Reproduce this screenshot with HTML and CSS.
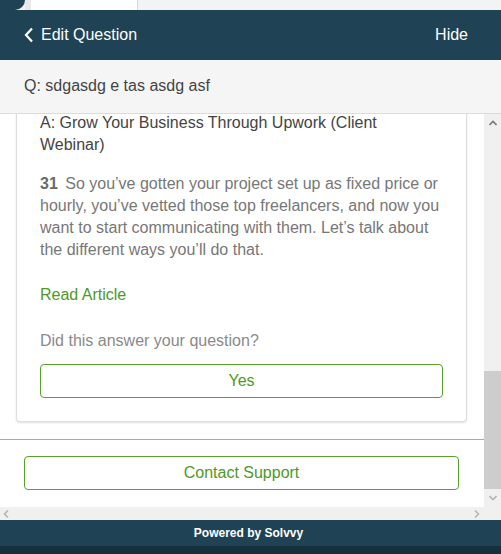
FILE: index.html
```html
<!DOCTYPE html>
<html lang="en">
<head>
    <meta charset="UTF-8">
    <meta name="viewport" content="width=device-width, initial-scale=1.0">
    <title>Solvvy - Edit Question</title>
    <link rel="stylesheet" href="styles.css">
</head>
<body>
    <div class="backdrop">
        <div class="blob"></div>
        <div class="gap"></div>
        <div class="sheet"></div>
        <div class="rest"></div>
    </div>

    <div class="widget">
        <div class="header">
            <a class="back" href="#">
                <svg width="10" height="16" viewBox="0 0 10 16"><path d="M8 1.5 L2 8 L8 14.5" fill="none" stroke="#fff" stroke-width="2.2"/></svg>
                Edit Question
            </a>
            <a class="hide" href="#">Hide</a>
        </div>

        <div class="question">Q: sdgasdg e tas asdg asf</div>

        <div class="scroller">
            <div class="content">
                <div class="card">
                    <h3 class="answer-title">A: Grow Your Business Through Upwork (Client Webinar)</h3>
                    <p class="answer-text"><b class="count">31</b> So you’ve gotten your project set up as fixed price or hourly, you’ve vetted those top freelancers, and now you want to start communicating with them. Let’s talk about the different ways you’ll do that.</p>
                    <a class="read-more" href="#">Read Article</a>
                    <p class="prompt">Did this answer your question?</p>
                    <button class="outline-btn">Yes</button>
                </div>
                <hr class="divider">
                <div class="contact">
                    <button class="outline-btn">Contact Support</button>
                </div>
            </div>
            <div class="vbar">
                <svg class="arrow" width="8" height="6" viewBox="0 0 8 6"><path d="M0.5 5 L4 1.5 L7.5 5" fill="none" stroke="#7a7a7a" stroke-width="1.6"/></svg>
                <div class="vtrack"><div class="vthumb"></div></div>
                <svg class="arrow" width="8" height="6" viewBox="0 0 8 6"><path d="M0.5 1 L4 4.5 L7.5 1" fill="none" stroke="#b5b5b5" stroke-width="1.6"/></svg>
            </div>
        </div>

        <div class="hbar">
            <svg width="6" height="8" viewBox="0 0 6 8"><path d="M5 0.5 L1.5 4 L5 7.5" fill="none" stroke="#b5b5b5" stroke-width="1.6"/></svg>
            <svg width="6" height="8" viewBox="0 0 6 8"><path d="M1 0.5 L4.5 4 L1 7.5" fill="none" stroke="#b5b5b5" stroke-width="1.6"/></svg>
            <div class="corner"></div>
        </div>

        <div class="footer">Powered by Solvvy</div>
        <div class="shade"></div>
    </div>
</body>
</html>
```

FILE: styles.css
```css
body {
    margin: 0;
    font-family: "Liberation Sans", Arial, sans-serif;
    background: #fff;
    width: 501px;
    overflow: hidden;
}
.backdrop {
    display: flex;
    height: 10px;
    background: #f3f3f3;
}
.blob {
    width: 25px;
    background: #1f4354;
    border-bottom-right-radius: 12px;
}
.gap {
    width: 6px;
    background: #e8e8e8;
}
.sheet {
    width: 106px;
    background: #fff;
    border-right: 1px solid #d8d8d8;
}
.rest {
    flex: 1;
}
.widget {
    display: flex;
    flex-direction: column;
}
.header {
    height: 50px;
    background: #1f4354;
    display: flex;
    align-items: center;
    justify-content: space-between;
    padding: 0 33px 0 24px;
    font-size: 16px;
}
.header a {
    color: #fff;
    text-decoration: none;
}
.back {
    display: flex;
    align-items: center;
    gap: 7px;
}
.question {
    height: 54px;
    box-sizing: border-box;
    border-bottom: 1px solid #dcdcdc;
    background: #f5f5f5;
    display: flex;
    align-items: center;
    padding: 0 24px 1px;
    color: #444;
    font-size: 16px;
}
.scroller {
    display: flex;
    height: 393px;
    overflow: hidden;
}
.content {
    width: 484px;
    background: #fff;
}
.card {
    margin: 0 17px 0 16px;
    border: 1px solid #dedede;
    border-top: none;
    border-radius: 0 0 4px 4px;
    box-shadow: 0 1px 2px rgba(0, 0, 0, 0.12);
    padding: 0 23px 23px;
}
.answer-title {
    margin: -2px 0 0;
    font-size: 16px;
    font-weight: normal;
    line-height: 22px;
    color: #444;
}
.answer-text {
    margin: 17px 0 0;
    font-size: 16px;
    line-height: 22px;
    color: #777;
}
.count {
    color: #6a6a6a;
    margin-right: 3px;
}
.read-more {
    display: block;
    margin-top: 23px;
    font-size: 16px;
    line-height: 22px;
    color: #4d9a25;
    text-decoration: none;
}
.prompt {
    margin: 24px 0 12px;
    font-size: 16px;
    line-height: 22px;
    color: #8a8a8a;
}
.outline-btn {
    display: block;
    width: 100%;
    height: 34px;
    background: #fff;
    border: 1px solid #5aa02c;
    border-radius: 4px;
    color: #4d9a25;
    font-family: "Liberation Sans", Arial, sans-serif;
    font-size: 16px;
    cursor: pointer;
}
.divider {
    margin: 17px 0 0;
    border: none;
    border-top: 1px solid #a8a8a8;
}
.contact {
    padding: 16px 25px 0 24px;
}
.vbar {
    width: 17px;
    background: #f0f0f0;
    display: flex;
    flex-direction: column;
    align-items: center;
}
.vbar .arrow {
    margin: 6px 0;
    flex: none;
}
.vtrack {
    flex: 1;
    width: 100%;
    display: flex;
    flex-direction: column;
    justify-content: flex-end;
}
.vthumb {
    height: 118px;
    background: #cdcdcd;
}
.hbar {
    height: 13px;
    background: #f0f0f0;
    display: flex;
    align-items: center;
    justify-content: space-between;
    padding-left: 3px;
}
.hbar svg:nth-child(2) {
    margin-left: auto;
    margin-right: 4px;
}
.corner {
    width: 17px;
    height: 100%;
    background: #f0f0f0;
}
.footer {
    height: 26px;
    background: #1f4354;
    color: #fff;
    font-size: 12px;
    font-weight: bold;
    display: flex;
    align-items: center;
    justify-content: center;
    padding-right: 4px;
}
.shade {
    height: 8px;
    background: #15303c;
}
```
